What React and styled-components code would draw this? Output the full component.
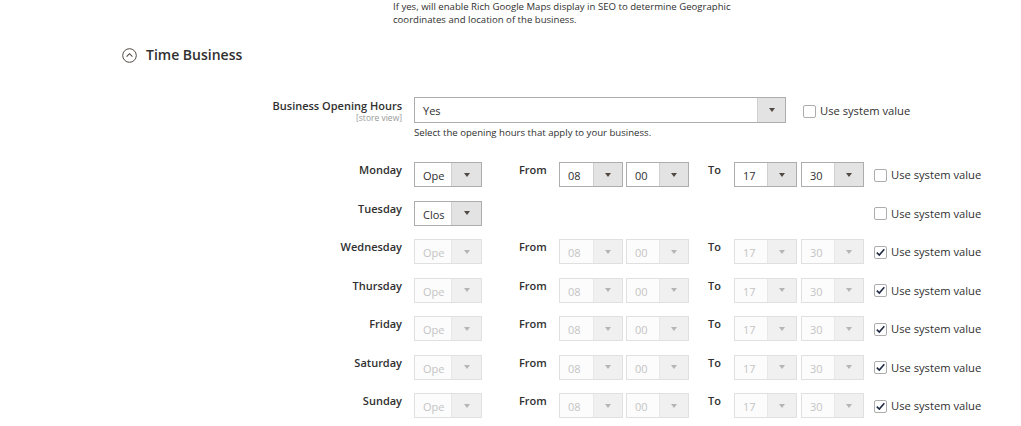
import React from "react";
import styled, { createGlobalStyle } from "styled-components";

const GlobalStyle = createGlobalStyle`
  html, body {
    margin: 0;
    padding: 0;
    background: #fff;
  }
  body {
    font-family: "Open Sans", "Noto Sans", sans-serif;
    color: #303030;
  }
`;

const days = [
  { name: "Monday", status: "Ope", from: ["08", "00"], to: ["17", "30"], system: false },
  { name: "Tuesday", status: "Clos", system: false, closed: true },
  { name: "Wednesday", status: "Ope", from: ["08", "00"], to: ["17", "30"], system: true },
  { name: "Thursday", status: "Ope", from: ["08", "00"], to: ["17", "30"], system: true },
  { name: "Friday", status: "Ope", from: ["08", "00"], to: ["17", "30"], system: true },
  { name: "Saturday", status: "Ope", from: ["08", "00"], to: ["17", "30"], system: true },
  { name: "Sunday", status: "Ope", from: ["08", "00"], to: ["17", "30"], system: true },
];

const Select = ({ value, width, arrow = 28, disabled }) => (
  <SelectBox $width={width} $disabled={disabled}>
    <SelectValue>{value}</SelectValue>
    <SelectArrow $width={arrow} $disabled={disabled}>
      <Caret $disabled={disabled} />
    </SelectArrow>
  </SelectBox>
);

const Checkbox = ({ checked }) => (
  <CheckLabel>
    <Box>
      {checked && (
        <svg width="11" height="11" viewBox="0 0 11 11">
          <path d="M1.8 5.6 L4.3 8.1 L9.3 2.3" fill="none" stroke="#1f2a44" strokeWidth="1.6" />
        </svg>
      )}
    </Box>
    Use system value
  </CheckLabel>
);

const App = () => {
  return (
    <Page>
      <GlobalStyle />
      <TopNote>
        If yes, will enable Rich Google Maps display in SEO to determine Geographic
        <br />
        coordinates and location of the business.
      </TopNote>

      <SectionTitle>
        <svg width="15" height="15" viewBox="0 0 15 15">
          <circle cx="7.5" cy="7.5" r="6.8" fill="none" stroke="#514943" strokeWidth="1" />
          <path d="M4.6 8.6 L7.5 5.7 L10.4 8.6" fill="none" stroke="#514943" strokeWidth="1.1" />
        </svg>
        Time Business
      </SectionTitle>

      <MainRow>
        <FieldLabel>
          Business Opening Hours
          <Scope>[store view]</Scope>
        </FieldLabel>
        <div>
          <Select value="Yes" width={372} arrow={27} />
          <Note>Select the opening hours that apply to your business.</Note>
        </div>
        <CheckCell $main>
          <Checkbox checked={false} />
        </CheckCell>
      </MainRow>

      {days.map((d) => {
        const off = d.system;
        return (
          <DayRow key={d.name}>
            <DayLabel>{d.name}</DayLabel>
            <Select value={d.status} width={68} arrow={29} disabled={off} />
            {!d.closed && (
              <>
                <RangeLabel>From</RangeLabel>
                <TimeGroup $gap={3}>
                  <Select value={d.from[0]} width={64} disabled={off} />
                  <Select value={d.from[1]} width={63} disabled={off} />
                </TimeGroup>
                <RangeLabel>To</RangeLabel>
                <TimeGroup $gap={4}>
                  <Select value={d.to[0]} width={63} disabled={off} />
                  <Select value={d.to[1]} width={63} disabled={off} />
                </TimeGroup>
              </>
            )}
            <CheckCell>
              <Checkbox checked={d.system} />
            </CheckCell>
          </DayRow>
        );
      })}
    </Page>
  );
};

const Page = styled.div`
  width: 1021px;
  height: 426px;
  overflow: hidden;
`;

const TopNote = styled.div`
  margin-left: 393px;
  font-size: 9.6px;
  line-height: 13px;
  color: #303030;
`;

const SectionTitle = styled.div`
  display: flex;
  align-items: center;
  gap: 9px;
  margin: 19px 0 0 122px;
  font-size: 14px;
  line-height: 20px;
  font-weight: 600;
  color: #303030;
`;

const MainRow = styled.div`
  display: grid;
  grid-template-columns: 414px 372px auto;
  margin: 32px 0 22px;
`;

const FieldLabel = styled.div`
  padding: 2px 12px 0 0;
  text-align: right;
  font-size: 11px;
  line-height: 14px;
  font-weight: 600;
`;

const Scope = styled.div`
  font-size: 8.5px;
  line-height: 10px;
  font-weight: 400;
  color: #999;
`;

const Note = styled.div`
  margin-top: 3px;
  font-size: 9.6px;
  line-height: 14px;
`;

const DayRow = styled.div`
  display: grid;
  grid-template-columns: 414px 105px 40px 149px 26px 140px auto;
  align-items: start;
  height: 38.5px;
`;

const DayLabel = styled.div`
  padding: 1px 12px 0 0;
  text-align: right;
  font-size: 11px;
  line-height: 14px;
  font-weight: 600;
`;

const RangeLabel = styled.div`
  padding-top: 1px;
  font-size: 11px;
  line-height: 14px;
  font-weight: 600;
`;

const TimeGroup = styled.div`
  display: flex;
  gap: ${(p) => p.$gap}px;
`;

const CheckCell = styled.div`
  grid-column: -2;
  padding: ${(p) => (p.$main ? "7px 0 0 17px" : "6px 0 0 0")};
`;

const SelectBox = styled.div`
  box-sizing: border-box;
  display: flex;
  width: ${(p) => p.$width}px;
  height: 25px;
  border: 1px solid ${(p) => (p.$disabled ? "#e0e0e0" : "#adadad")};
  background: ${(p) => (p.$disabled ? "#fcfcfc" : "#fff")};
  color: ${(p) => (p.$disabled ? "#c4c4c4" : "#303030")};
  ${MainRow} & {
    height: 26px;
  }
`;

const SelectValue = styled.div`
  flex: 1;
  padding: 2px 0 0 8px;
  font-size: 11px;
  line-height: 22px;
  white-space: nowrap;
  overflow: hidden;
`;

const SelectArrow = styled.div`
  flex: none;
  width: ${(p) => p.$width}px;
  display: flex;
  align-items: center;
  justify-content: center;
  border-left: 1px solid ${(p) => (p.$disabled ? "#e8e8e8" : "#d0d0d0")};
  background: ${(p) => (p.$disabled ? "#f0f0f0" : "#e3e3e3")};
`;

const Caret = styled.span`
  width: 0;
  height: 0;
  border-left: 3.5px solid transparent;
  border-right: 3.5px solid transparent;
  border-top: 4px solid ${(p) => (p.$disabled ? "#b5b5b5" : "#514943")};
`;

const CheckLabel = styled.label`
  display: flex;
  align-items: center;
  gap: 4px;
  font-size: 11.2px;
  line-height: 14px;
  color: #303030;
  white-space: nowrap;
`;

const Box = styled.span`
  box-sizing: border-box;
  width: 13px;
  height: 13px;
  border: 1px solid #adadad;
  border-radius: 2px;
  background: #fff;
  display: flex;
  align-items: center;
  justify-content: center;
`;

export default App;
